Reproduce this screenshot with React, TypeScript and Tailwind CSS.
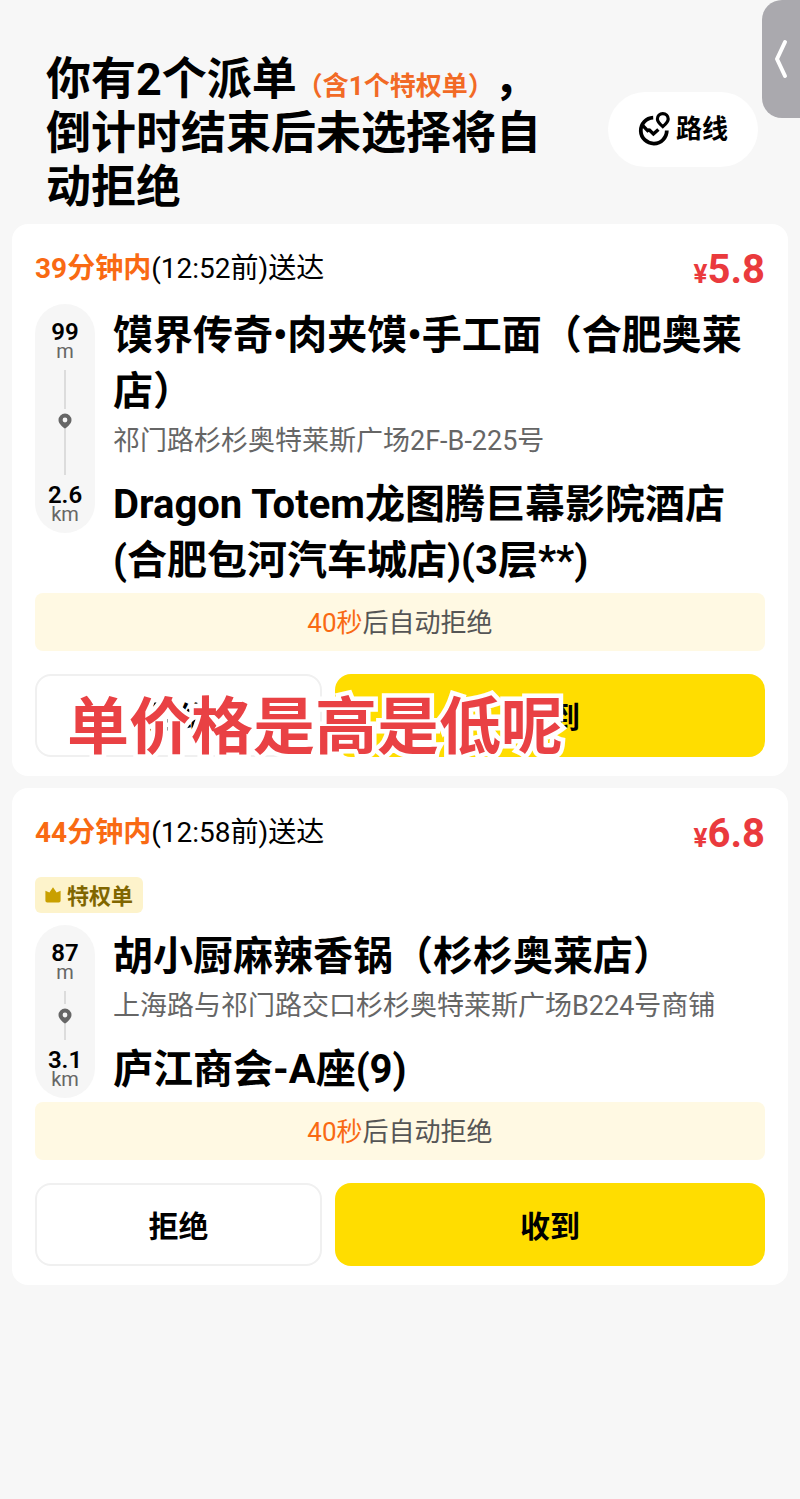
import React from 'react'

interface Order {
  id: string
  minutes: number
  deadline: string
  price: string
  privileged?: boolean
  pickupDistance: [string, string]
  dropDistance: [string, string]
  shop: string
  address: string
  destination: string
  countdown: number
  railClass?: string
  caption?: string
}

const ORDERS: Order[] = [
  {
    id: 'a',
    minutes: 39,
    deadline: '12:52',
    price: '5.8',
    pickupDistance: ['99', 'm'],
    dropDistance: ['2.6', 'km'],
    shop: '馍界传奇•肉夹馍•手工面（合肥奥莱店）',
    address: '祁门路杉杉奥特莱斯广场2F-B-225号',
    destination: 'Dragon Totem龙图腾巨幕影院酒店(合肥包河汽车城店)(3层**)',
    countdown: 40,
    // destination takes two lines, the rail stops at the first
    railClass: 'mb-14',
    caption: '单价格是高是低呢',
  },
  {
    id: 'b',
    minutes: 44,
    deadline: '12:58',
    price: '6.8',
    privileged: true,
    pickupDistance: ['87', 'm'],
    dropDistance: ['3.1', 'km'],
    shop: '胡小厨麻辣香锅（杉杉奥莱店）',
    address: '上海路与祁门路交口杉杉奥特莱斯广场B224号商铺',
    destination: '庐江商会-A座(9)',
    countdown: 40,
  },
]

const RouteIcon: React.FC = () => (
  <svg width="32" height="34" viewBox="0 0 32 34" fill="none" stroke="currentColor" strokeWidth="3.8" aria-hidden="true">
    <path d="M15.2 5.6 A13 13 0 1 0 28.8 18.6" />
    <path d="M4.6 13.4 L9.6 18.6 Q11.4 17.4 12.8 19.4 L15.4 22 L20.4 17.4" strokeWidth="3.4" />
    <path d="M24.8 14.6 C21 11.4 19.4 9.2 19.4 7 A5.4 5.4 0 0 1 30.2 7 C30.2 9.2 28.6 11.4 24.8 14.6 Z" strokeWidth="3.2" />
  </svg>
)

const PinIcon: React.FC = () => (
  <svg width="14" height="16" viewBox="0 0 14 16" aria-hidden="true">
    <path
      fill="#666"
      fillRule="evenodd"
      d="M7 0.5 A6.5 6.5 0 0 1 13.5 7 C13.5 10.4 10.4 13 7 15.8 C3.6 13 0.5 10.4 0.5 7 A6.5 6.5 0 0 1 7 0.5 Z M7 4.6 A2.4 2.4 0 1 0 7 9.4 A2.4 2.4 0 1 0 7 4.6 Z"
    />
  </svg>
)

const CrownIcon: React.FC = () => (
  <svg width="16" height="16" viewBox="0 0 16 16" fill="#c9a000" aria-hidden="true">
    <path d="M0.4 3.8 L4.4 5.6 L8 0.2 L11.6 5.6 L15.6 3.8 V13.8 Q15.6 15.6 13.8 15.6 H2.2 Q0.4 15.6 0.4 13.8 Z" />
  </svg>
)

const Distance: React.FC<{ value: [string, string] }> = ({ value }) => (
  <div className="flex flex-col items-center">
    <span className="text-2xl leading-5 font-semibold text-black">{value[0]}</span>
    <span className="text-xl leading-[18px] text-[#666]">{value[1]}</span>
  </div>
)

const OrderCard: React.FC<{ order: Order }> = ({ order }) => (
  <section className="rounded-2xl bg-white px-[23px] pb-[19px]">
    <div className="flex h-20 items-center justify-between pt-2.5">
      <p className="text-[28px] leading-10 font-[390] text-black">
        <span className="font-bold text-[#f96a13]">{order.minutes}分钟内</span>({order.deadline}前)送达
      </p>
      <p className="pt-1.5 text-[26px] leading-10 font-bold text-[#ea3a3d]">
        ¥<span className="text-[40px]">{order.price}</span>
      </p>
    </div>

    {order.privileged && (
      <div className="mt-[9px] mb-3 flex h-9 w-27 items-center justify-center gap-1.5 rounded-md bg-[#fdf3cb]">
        <CrownIcon />
        <span className="pt-1 text-[22px] leading-8 font-bold text-[#806600]">特权单</span>
      </div>
    )}

    <div className="flex gap-[18px]">
      <div className={`flex w-15 shrink-0 flex-col items-center rounded-full bg-[#f6f6f6] pt-[18px] pb-2.5 ${order.railClass ?? ''}`}>
        <Distance value={order.pickupDistance} />
        <div className="my-2.5 flex flex-1 flex-col items-center">
          <span className="w-0.5 flex-5 bg-[#dcdcdc]" />
          <span className="mt-1"><PinIcon /></span>
          <span className="w-0.5 flex-6 bg-[#dcdcdc]" />
        </div>
        <Distance value={order.dropDistance} />
      </div>
      <div className="min-w-0 flex-1 pt-1">
        <h2 className="text-[40px] leading-14 font-bold text-black">{order.shop}</h2>
        <p className="mt-[3px] text-[27px] leading-9 font-[390] text-[#666]">{order.address}</p>
        <h2 className="mt-[18px] text-[40px] leading-14 font-bold text-black">{order.destination}</h2>
      </div>
    </div>

    <p className="mt-1 rounded-lg bg-[#fff9e3] pt-2.5 pb-2 text-center text-[26px] leading-10 font-[390] text-[#555]">
      <span className="text-[#f96a13]">{order.countdown}秒</span>后自动拒绝
    </p>

    <div className="relative mt-[23px] grid grid-cols-[2fr_3fr] gap-[13px]">
      <button className="h-[83px] rounded-2xl border-2 border-[#f0f0f0] bg-white pt-1 text-3xl font-bold text-black">拒绝</button>
      <button className="h-[83px] rounded-2xl bg-[#ffdd00] pt-1 text-3xl font-bold text-black">收到</button>
      {order.caption && (
        <p className="pointer-events-none absolute top-0 left-8 text-[62px] leading-[108px] font-bold whitespace-nowrap text-[#e94144] [paint-order:stroke_fill] [-webkit-text-stroke:9px_white]">
          {order.caption}
        </p>
      )}
    </div>
  </section>
)

export default function App() {
  return (
    <main lang="zh-CN" className="relative min-h-screen overflow-x-hidden bg-[#f7f7f7] px-3 font-['Roboto','Noto_Sans_CJK_SC',sans-serif]">
      <header className="flex items-center justify-between gap-10 pt-[53px] pr-[30px] pb-[9px] pl-[34px]">
        <h1 className="min-w-0 flex-1 text-[45px] leading-[54px] font-bold text-black [text-spacing-trim:space-all]">
          你有2个派单<span className="text-[26px] leading-none text-[#f26a25]">（含1个特权单）</span>，倒计时结束后未选择将自动拒绝
        </h1>
        <button className="mb-2.5 flex h-[75px] w-[150px] shrink-0 items-center justify-center gap-1.5 rounded-full bg-white text-[26px] font-bold text-black">
          <RouteIcon />
          路线
        </button>
      </header>

      <button aria-label="返回" className="absolute top-0 right-0 flex h-[118px] w-[38px] items-center justify-center rounded-l-[20px] bg-[#aaa9ae] text-white">
        <svg width="14" height="40" viewBox="0 0 14 40" fill="none" stroke="currentColor" strokeWidth="4" strokeLinecap="round" strokeLinejoin="round" aria-hidden="true">
          <path d="M11 3 L3 20 L11 37" />
        </svg>
      </button>

      <div className="flex flex-col gap-3">
        {ORDERS.map(order => (
          <OrderCard key={order.id} order={order} />
        ))}
      </div>
    </main>
  )
}
